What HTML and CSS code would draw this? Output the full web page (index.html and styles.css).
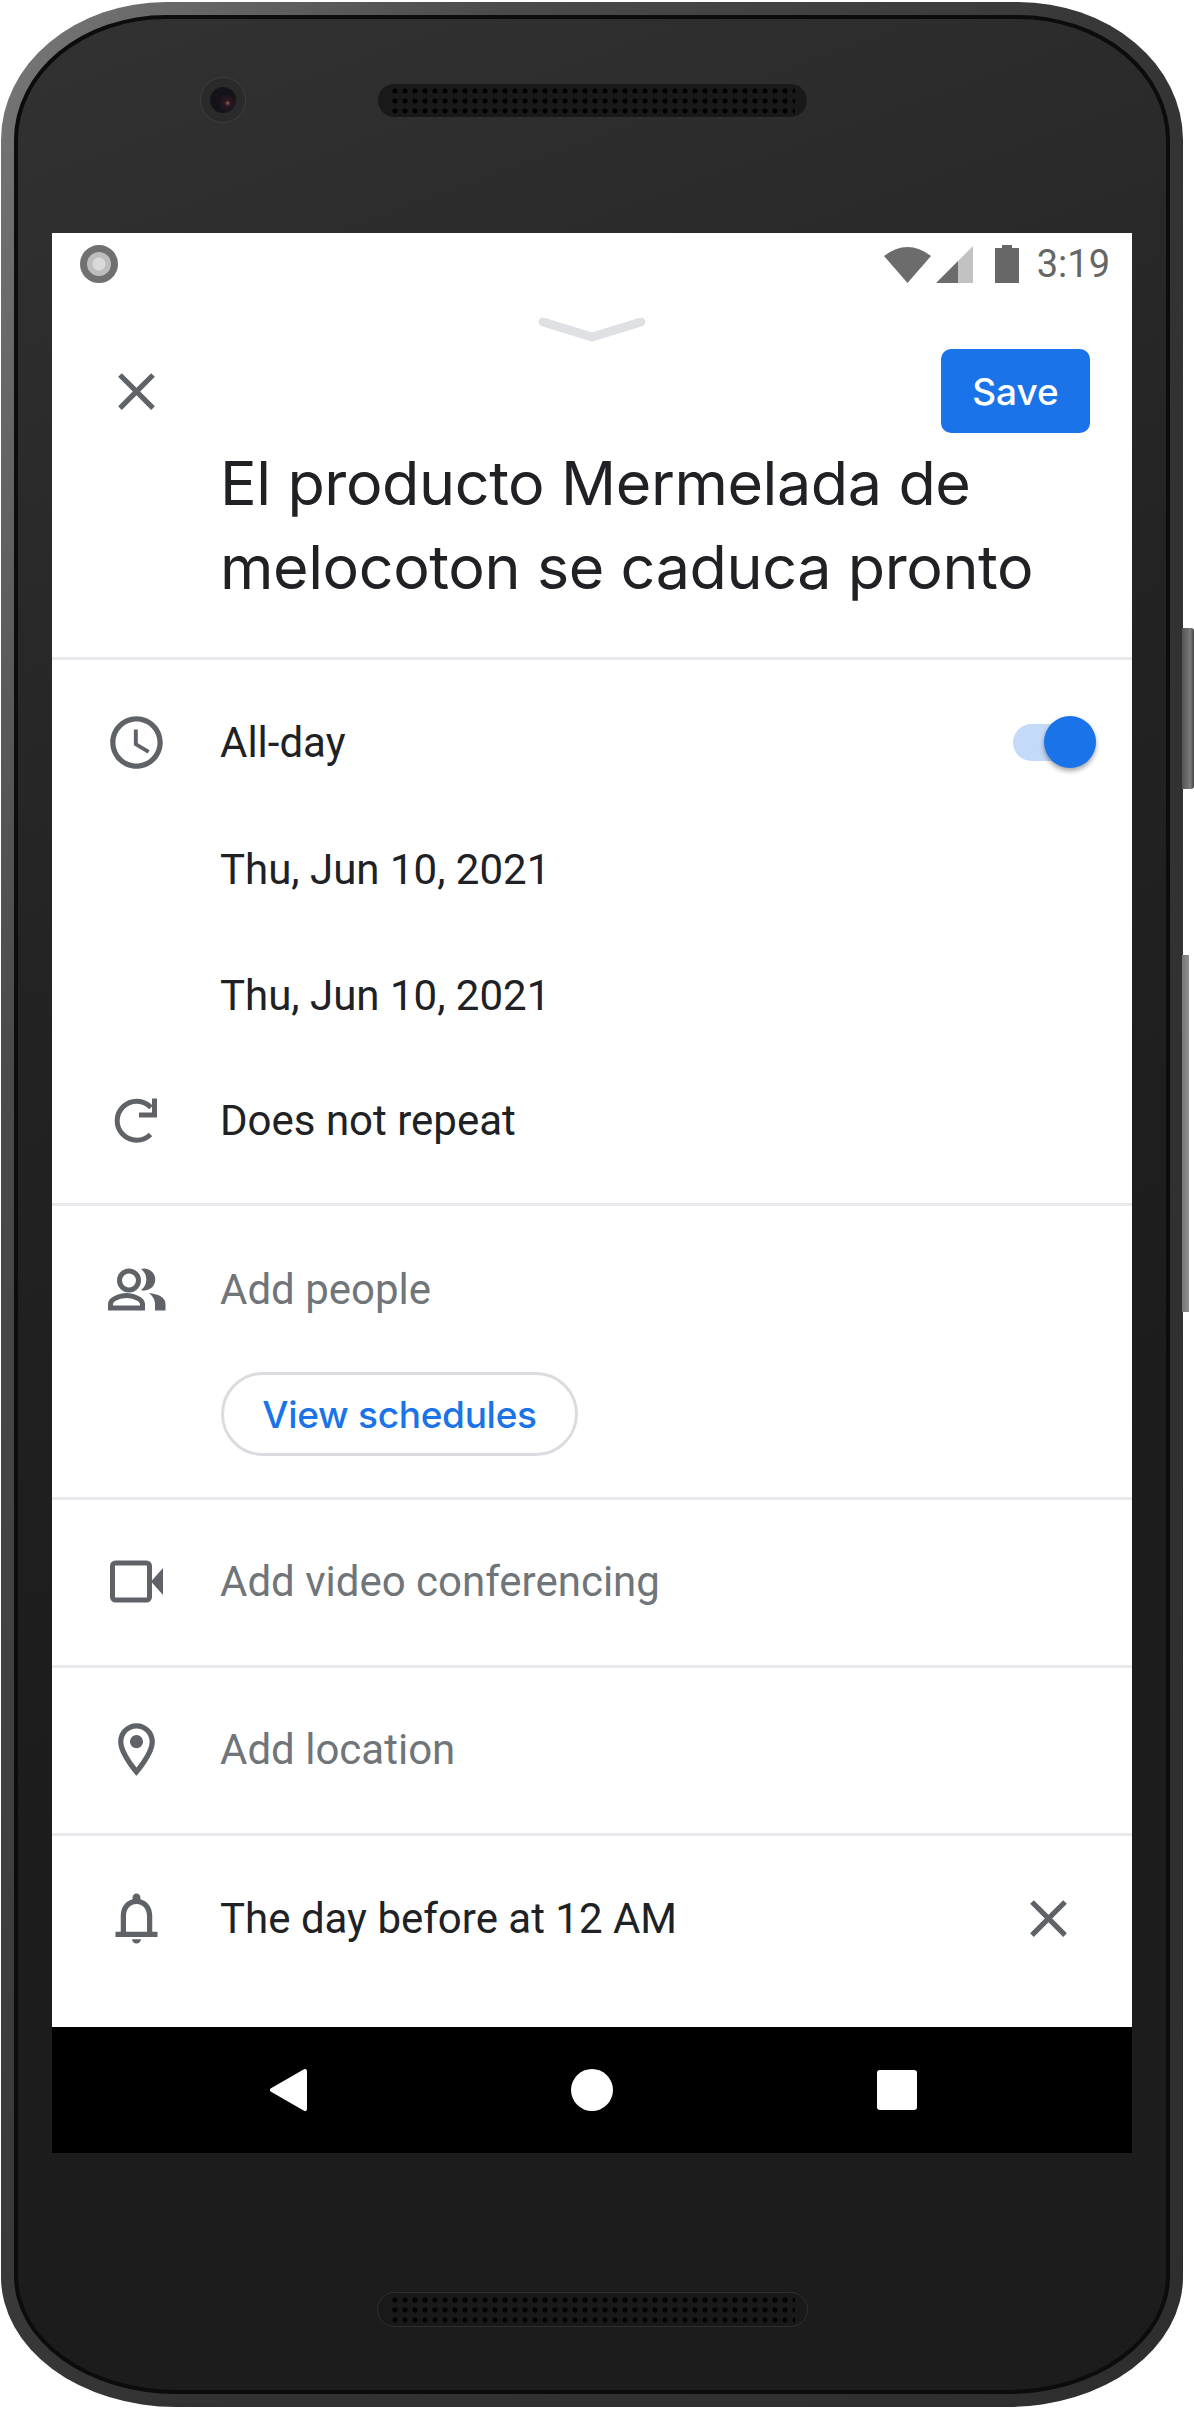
FILE: index.html

```html
<!DOCTYPE html>
<html lang="en">

<head>
    <meta charset="UTF-8">
    <meta name="viewport" content="width=device-width, initial-scale=1.0">
    <title>New event</title>
    <link rel="stylesheet" href="styles.css">
</head>

<body>
    <div class="phone">
        <div class="btn-power"></div>
        <div class="btn-volume"></div>
        <div class="phone-inner">
            <div class="bezel-top">
                <div class="camera"><div class="lens"></div></div>
                <div class="speaker"><div class="grille"></div></div>
            </div>

            <div class="screen">
                <div class="status">
                    <div class="rec"></div>
                    <svg class="ic-wifi" width="47" height="37" viewBox="0 0 47 37"><path fill="#6c6c6c" d="M0 10Q23.5-8 47 10L23.5 37z"/></svg>
                    <svg class="ic-signal" width="37" height="37" viewBox="0 0 37 37"><path fill="#6c6c6c" d="M0 37 22 15V37z"/><path fill="#c2c2c2" d="M22 15 37 0V37H22z"/></svg>
                    <svg class="ic-battery" width="24" height="38" viewBox="0 0 24 38"><path fill="#676767" d="M7 0h10v3h7v35H0V3h7z"/></svg>
                    <span class="clock">3:19</span>
                </div>

                <div class="content">
                    <div class="handle">
                        <svg width="108" height="27" viewBox="0 0 108 27"><path fill="none" stroke="#dfe0e4" stroke-width="9" stroke-linecap="round" stroke-linejoin="round" d="M5 7 54 22 103 7"/></svg>
                    </div>
                    <div class="toolbar">
                        <svg class="icon" viewBox="0 0 24 24"><path d="M19 6.41 17.59 5 12 10.59 6.41 5 5 6.41 10.59 12 5 17.59 6.41 19 12 13.41 17.59 19 19 17.59 13.41 12z"/></svg>
                        <button class="save">Save</button>
                    </div>
                    <h1 class="title">El producto Mermelada de<br>melocoton se caduca pronto</h1>

                    <div class="section section-time">
                        <div class="row">
                            <svg class="icon" viewBox="0 0 24 24"><path d="M11.99 2C6.47 2 2 6.48 2 12s4.47 10 9.99 10C17.52 22 22 17.52 22 12S17.52 2 11.99 2zM12 20c-4.42 0-8-3.58-8-8s3.58-8 8-8 8 3.58 8 8-3.58 8-8 8zM12.5 7H11v6l5.25 3.15.75-1.23-4.5-2.67z"/></svg>
                            <span class="label">All-day</span>
                            <div class="switch"><div class="knob"></div></div>
                        </div>
                        <div class="row"><span class="label no-icon date">Thu, Jun 10, 2021</span></div>
                        <div class="row"><span class="label no-icon date">Thu, Jun 10, 2021</span></div>
                        <div class="row">
                            <svg class="icon" viewBox="0 0 63 63"><path fill="none" stroke="#5f6368" stroke-width="5" d="M45.5 45.5A19.5 19.5 0 1 1 46 18.5"/><path fill="none" stroke="#5f6368" stroke-width="5" d="M34 26H49.5V9.5"/></svg>
                            <span class="label">Does not repeat</span>
                        </div>
                    </div>

                    <div class="section section-people">
                        <div class="row">
                            <svg class="icon" viewBox="0 0 63 63"><path fill-rule="evenodd" d="M24 10.5a12 12 0 1 1 0 24 12 12 0 0 1 0-24zm0 5a7 7 0 1 0 0 14 7 7 0 0 0 0-14z"/><path d="M36 11A11 11 0 1 1 36 32 13 13 0 0 0 36 11z"/><path fill-rule="evenodd" d="M3 52.5V46c0-7 11-11 18.5-11S40 39 40 46v6.5zM8 47.5h27V46c0-3-8-6-13.500-6S8 43 8 46z"/><path d="M44 35C53 36 60.5 39 60.5 46V52.5H50V46C50 42 48 38 44 35z"/></svg>
                            <span class="label muted">Add people</span>
                        </div>
                        <button class="pill">View schedules</button>
                    </div>

                    <div class="section">
                        <div class="row">
                            <svg class="icon" viewBox="0 0 63 63"><rect x="7.5" y="13" width="37" height="37" rx="3" fill="none" stroke="#5f6368" stroke-width="5"/><path d="M46 31.5 58 18V45z"/></svg>
                            <span class="label muted">Add video conferencing</span>
                        </div>
                    </div>

                    <div class="section">
                        <div class="row">
                            <svg class="icon" viewBox="0 0 24 24"><path d="M12 2C8.13 2 5 5.13 5 9c0 5.25 7 13 7 13s7-7.75 7-13c0-3.87-3.13-7-7-7zM7 9c0-2.76 2.24-5 5-5s5 2.24 5 5c0 2.88-2.88 7.19-5 9.88C9.92 16.21 7 11.85 7 9z"/><circle cx="12" cy="9" r="2.5"/></svg>
                            <span class="label muted">Add location</span>
                        </div>
                    </div>

                    <div class="section section-last">
                        <div class="row">
                            <svg class="icon" viewBox="0 0 24 24"><path d="M12 21.5c.9 0 1.7-.7 1.7-1.6h-3.4c0 .9.8 1.6 1.7 1.6zM18 17v-6c0-3.07-1.64-5.64-4.5-6.32V4c0-.83-.67-1.5-1.5-1.5s-1.5.67-1.5 1.5v.68C7.63 5.36 6 7.92 6 11v6H4v2h16v-2h-2zm-2 0H8v-6c0-2.48 1.51-4.5 4-4.5s4 2.02 4 4.5v6z"/></svg>
                            <span class="label">The day before at 12 AM</span>
                            <svg class="icon icon-end" viewBox="0 0 24 24"><path d="M19 6.41 17.59 5 12 10.59 6.41 5 5 6.41 10.59 12 5 17.59 6.41 19 12 13.41 17.59 19 19 17.59 13.41 12z"/></svg>
                        </div>
                        <div class="row row-clipped">
                            <span class="label no-icon">The day before at 9 AM</span>
                            <svg class="icon icon-end" viewBox="0 0 24 24"><path d="M19 6.41 17.59 5 12 10.59 6.41 5 5 6.41 10.59 12 5 17.59 6.41 19 12 13.41 17.59 19 19 17.59 13.41 12z"/></svg>
                        </div>
                    </div>
                </div>

                <div class="nav">
                    <svg width="37" height="42" viewBox="0 0 37 42"><path fill="#fff" stroke="#fff" stroke-width="4" stroke-linejoin="round" d="M35 2 2 21 35 40z"/></svg>
                    <div class="nav-home"></div>
                    <div class="nav-recent"></div>
                </div>
            </div>

            <div class="bezel-bottom">
                <div class="speaker"><div class="grille"></div></div>
            </div>
        </div>
    </div>
</body>

</html>
```

FILE: styles.css

```css
* {
    box-sizing: border-box;
}

body {
    margin: 0;
    background: #fff;
    font-family: Roboto, sans-serif;
    overflow: hidden;
}

/* device frame */
.phone {
    position: relative;
    width: 1182px;
    height: 2405px;
    margin: 2px 0 0 1px;
    padding: 13px;
    border-radius: 165px 165px 175px 175px / 138px 138px 130px 130px;
    background: linear-gradient(115deg, #787878 0%, #4a4a4a 22%, #333 55%, #2e2e2e 100%);
}

.phone-inner {
    height: 100%;
    border: 4px solid #0c0c0c;
    border-radius: 152px 152px 162px 162px / 125px 125px 118px 118px;
    background: linear-gradient(160deg, #323232 0%, #232323 35%, #1c1c1c 65%, #1c1c1c 100%);
}

.btn-power {
    position: absolute;
    top: 626px;
    right: -11px;
    width: 12px;
    height: 161px;
    border-radius: 0 3px 3px 0;
    background: linear-gradient(90deg, #555, #7a7a7a 70%, #444);
}

.btn-volume {
    position: absolute;
    top: 953px;
    right: -6px;
    width: 7px;
    height: 357px;
    background: linear-gradient(90deg, #777, #8f8f8f);
}

.bezel-top {
    display: flex;
    align-items: center;
    height: 214px;
    padding: 0 0 52px 182px;
}

.camera {
    display: flex;
    align-items: center;
    justify-content: center;
    width: 46px;
    height: 46px;
    border: 1px solid #3f3f3f;
    border-radius: 50%;
    background: #2a2a2a;
}

.lens {
    width: 26px;
    height: 26px;
    border-radius: 50%;
    background: radial-gradient(circle at 68% 62%, #a8555a 0, #2a1a20 12%, #15131a 40%);
}

.speaker {
    width: 431px;
    height: 35px;
    margin-left: 131px;
    padding: 2px 12px;
    border: 1px solid #2f2f2f;
    border-radius: 18px;
    background: #191919;
}

.grille {
    height: 29px;
    background-image: radial-gradient(circle, #030303 2.2px, transparent 3px);
    background-size: 10px 10px;
    background-position: 0 0;
}

.bezel-bottom {
    display: flex;
    justify-content: center;
    padding-top: 139px;
}

.bezel-bottom .speaker {
    margin-left: 0;
}

/* screen */
.screen {
    display: flex;
    flex-direction: column;
    width: 1080px;
    height: 1920px;
    margin-left: 34px;
    background: #fff;
}

.status {
    display: flex;
    flex: none;
    align-items: center;
    height: 70px;
    padding: 0 22px 8px 28px;
}

.rec {
    width: 38px;
    height: 38px;
    border: 7px solid #707070;
    border-radius: 50%;
    background: radial-gradient(circle, #d9d9d9 0 6px, #bdbdbd 7px);
}

.ic-wifi {
    margin-left: auto;
}

.ic-signal {
    margin-left: 5px;
}

.ic-battery {
    margin-left: 22px;
}

.clock {
    margin-left: 18px;
    font-size: 38px;
    color: #666;
}

.content {
    flex: 1;
    min-height: 0;
    overflow: hidden;
}

.handle {
    display: flex;
    justify-content: center;
    height: 46px;
    padding-top: 12px;
}

.toolbar {
    display: flex;
    align-items: center;
    justify-content: space-between;
    height: 84px;
    padding: 0 42px 0 53px;
}

.icon {
    flex: none;
    width: 63px;
    height: 63px;
    fill: #5f6368;
}

.save {
    width: 149px;
    height: 84px;
    border: none;
    border-radius: 10px;
    background: #1a73e8;
    color: #fff;
    font-family: Inter, sans-serif;
    font-size: 37px;
    font-weight: 500;
}

.title {
    height: 227px;
    margin: 0;
    padding: 8px 0 0 168px;
    border-bottom: 3px solid #e8eaed;
    font-family: Inter, sans-serif;
    font-size: 61px;
    font-weight: 400;
    letter-spacing: -0.4px;
    line-height: 84px;
    color: #202124;
}

.section {
    padding: 18px 0 21px;
    border-bottom: 3px solid #e8eaed;
}

.section-time {
    padding: 19px 0 20px;
}

.section-people {
    padding: 20px 0 41px;
}

.section-last {
    padding: 19px 0 0;
    border-bottom: none;
}

.row {
    display: flex;
    align-items: center;
    height: 126px;
    padding-left: 53px;
}

.row-clipped {
    margin-top: 1px;
}

.label {
    margin-left: 52px;
    font-size: 42px;
    color: #202124;
}

.label.no-icon {
    margin-left: 115px;
}

.label.date {
    padding-top: 3px;
}

.muted {
    color: #70757a;
}

.icon-end {
    margin: 0 52px 0 auto;
}

.switch {
    position: relative;
    width: 83px;
    height: 37px;
    margin: 0 36px 0 auto;
    border-radius: 19px;
    background: #c3daf9;
}

.knob {
    position: absolute;
    top: -8px;
    right: 0;
    width: 52px;
    height: 52px;
    border-radius: 50%;
    background: #1a73e8;
    box-shadow: 0 3px 5px rgba(0, 0, 0, 0.35);
}

.pill {
    display: block;
    width: 357px;
    height: 84px;
    margin: 20px 0 0 169px;
    border: 3px solid #dadce0;
    border-radius: 42px;
    background: #fff;
    color: #1a73e8;
    font-family: Inter, sans-serif;
    font-size: 37px;
    font-weight: 500;
    letter-spacing: -0.3px;
}

.nav {
    display: flex;
    flex: none;
    align-items: center;
    gap: 264px;
    height: 126px;
    padding-left: 218px;
    background: #000;
}

.nav-home {
    width: 42px;
    height: 42px;
    border-radius: 50%;
    background: #fff;
}

.nav-recent {
    width: 40px;
    height: 40px;
    border-radius: 3px;
    background: #fff;
}
```
